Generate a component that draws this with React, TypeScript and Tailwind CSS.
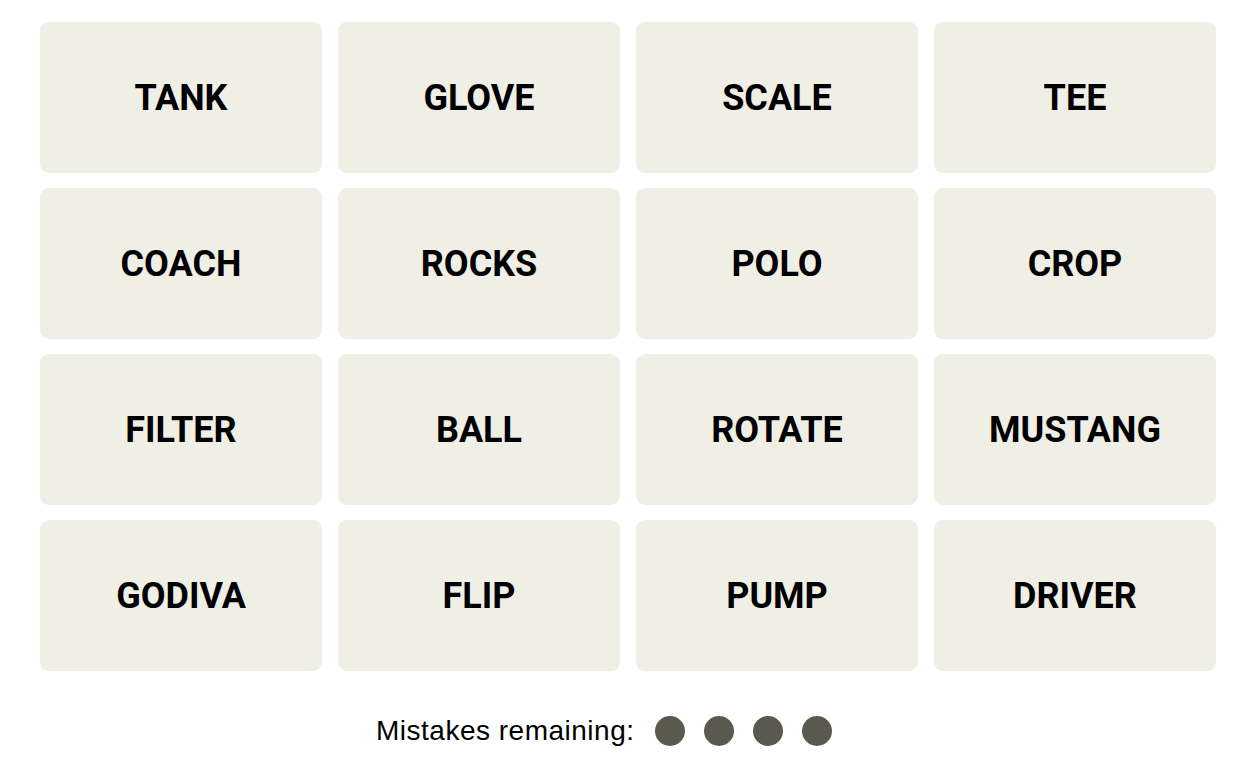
const words = [
  "TANK", "GLOVE", "SCALE", "TEE",
  "COACH", "ROCKS", "POLO", "CROP",
  "FILTER", "BALL", "ROTATE", "MUSTANG",
  "GODIVA", "FLIP", "PUMP", "DRIVER",
];

export default function App() {
  return (
    <div className="w-[1250px] h-[777px] bg-white pt-[22px] pl-[40px]" style={{ fontFamily: "Roboto, 'Liberation Sans', sans-serif" }}>
      <div className="grid grid-cols-[repeat(4,282px)] auto-rows-[151px] gap-x-4 gap-y-[15px]">
        {words.map((w) => (
          <div
            key={w}
            className="bg-[#efefe6] rounded-[9px] flex items-center justify-center text-[36px] font-bold text-black"
          >
            {w}
          </div>
        ))}
      </div>
      <div className="flex items-center pl-[336px] mt-[39px]">
        <span className="text-[28px] tracking-[0.5px] text-black" style={{ fontFamily: "'Liberation Sans', sans-serif" }}>
          Mistakes remaining:
        </span>
        <div className="flex gap-[19px] ml-[21px]">
          {[0, 1, 2, 3].map((i) => (
            <span key={i} className="w-[30px] h-[30px] rounded-full bg-[#5a594e]" />
          ))}
        </div>
      </div>
    </div>
  );
}
